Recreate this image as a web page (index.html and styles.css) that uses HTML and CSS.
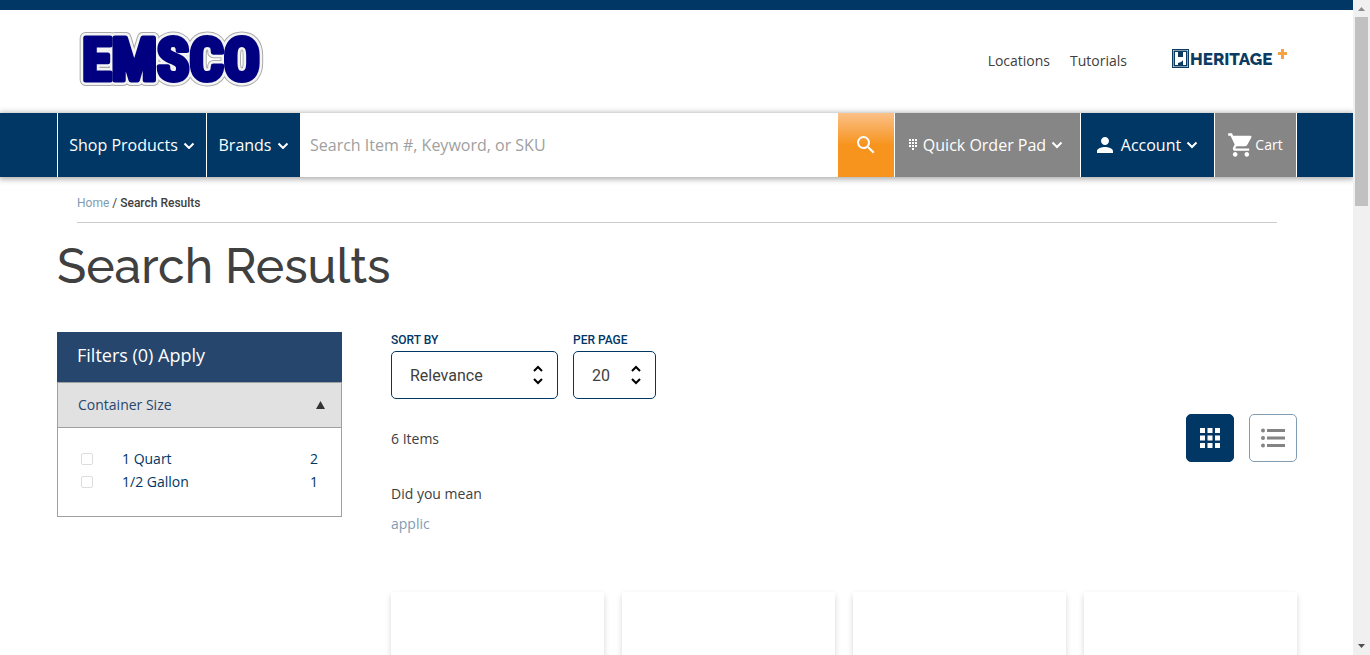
FILE: index.html
```
<!DOCTYPE html>
<html lang="en">
<head>
<meta charset="utf-8">
<title>Search Results</title>
<link rel="stylesheet" href="styles.css">
</head>
<body>
<div class="shell">
<div class="page">
  <header class="header">
    <a class="logo" href="#" aria-label="EMSCO">
      <svg width="200" height="84" viewBox="0 0 200 84">
        <g class="logo-text" font-size="60" text-anchor="middle">
          <text class="logo-edge" x="100" y="64">EMSCO</text>
          <text class="logo-halo" x="100" y="64">EMSCO</text>
          <text class="logo-face" x="100" y="64">EMSCO</text>
        </g>
      </svg>
    </a>
    <nav class="top-links">
      <a href="#">Locations</a>
      <a href="#">Tutorials</a>
      <a class="heritage" href="#" aria-label="Heritage Plus">
        <svg width="116" height="22" viewBox="0 0 116 22">
          <rect x="0.500" y="1.500" width="16" height="18" fill="#fff" stroke="#0b3b62"/>
          <path fill="#0b3b62" d="M1.500 2.500h14v16h-14z"/>
          <path fill="#fff" d="M3 4h3v5h5V4h3v13h-3v-5c-1 2-3 2-5 3v2H3z"/>
          <text class="heritage-text" x="18" y="17" font-size="17">HERITAGE</text>
          <path fill="#f7a145" d="M109 1h3v3h3v3h-3v4h-3V7h-3V4h3z"/>
        </svg>
      </a>
    </nav>
  </header>

  <div class="navbar">
    <button class="nav-item nav-shop" type="button">Shop Products
      <svg class="chev" width="12" height="8" viewBox="0 0 12 8"><path d="M1.500 2.500 6 7l4.500-4.500"/></svg></button>
    <button class="nav-item nav-brands" type="button">Brands
      <svg class="chev" width="12" height="8" viewBox="0 0 12 8"><path d="M1.500 2.500 6 7l4.500-4.500"/></svg></button>
    <input class="search" type="search" aria-label="Search" placeholder="Search Item #, Keyword, or SKU">
    <button class="search-btn" type="button" aria-label="Search">
      <svg width="24" height="24" viewBox="0 0 24 24"><path fill="#fff" d="M15.500 14h-.79l-.28-.27A6.470 6.470 0 0 0 16 9.500 6.500 6.500 0 1 0 9.500 16c1.610 0 3.090-.59 4.230-1.570l.27.28v.79l5 4.990L20.490 19l-4.990-5zm-6 0C7.010 14 5 11.990 5 9.500S7.010 5 9.500 5 14 7.010 14 9.500 11.990 14 9.500 14z"/></svg>
    </button>
    <button class="nav-item nav-quick" type="button">
      <svg class="pad" width="9" height="12" viewBox="0 0 9 12"><path fill="#fff" d="M0 0h2v2H0zM3 0h2v2H3zM6 0h2v2H6zM0 3h2v2H0zM3 3h2v2H3zM6 3h2v2H6zM0 6h2v2H0zM3 6h2v2H3zM6 6h2v2H6zM3 9h2v2H3z"/></svg>Quick Order Pad
      <svg class="chev" width="12" height="8" viewBox="0 0 12 8"><path d="M1.500 1.500 6 6l4.500-4.500"/></svg></button>
    <button class="nav-item nav-account" type="button">
      <svg class="person" width="16" height="16" viewBox="4 4 16 16"><path fill="#fff" d="M12 12c2.210 0 4-1.790 4-4s-1.790-4-4-4-4 1.790-4 4 1.790 4 4 4zm0 2c-2.670 0-8 1.340-8 4v2h16v-2c0-2.660-5.330-4-8-4z"/></svg>Account
      <svg class="chev" width="12" height="8" viewBox="0 0 12 8"><path d="M1.500 1.500 6 6l4.500-4.500"/></svg></button>
    <button class="nav-item nav-cart" type="button">
      <svg width="26" height="28" viewBox="1 0 22 24"><path fill="#fff" d="M7 18c-1.100 0-1.990.9-1.990 2S5.900 22 7 22s2-.9 2-2-.9-2-2-2zM1 2v2h2l3.600 7.590-1.350 2.450c-.16.280-.25.610-.25.960 0 1.100.9 2 2 2h12v-2H7.420c-.14 0-.25-.11-.25-.25l.03-.12.900-1.630h7.450c.75 0 1.410-.41 1.750-1.030l3.580-6.490A1 1 0 0 0 20 4H5.210l-.94-2H1zm16 16c-1.100 0-1.990.9-1.990 2s.89 2 1.990 2 2-.9 2-2-.9-2-2-2z"/></svg>Cart</button>
  </div>

  <main class="main">
    <nav class="crumbs" aria-label="Breadcrumb"><a href="#">Home</a> / <strong>Search Results</strong></nav>
    <h1 class="title">Search Results</h1>
    <div class="columns">
      <aside class="filters">
        <h2 class="filters-head">Filters (0) Apply</h2>
        <button class="group-head" type="button">Container Size
          <svg width="9" height="8" viewBox="0 0 9 8"><path fill="#333" d="M4.500 0 9 8H0z"/></svg></button>
        <div class="group-body">
          <label class="option"><input type="checkbox"><span>1 Quart</span><span class="count">2</span></label>
          <label class="option"><input type="checkbox"><span>1/2 Gallon</span><span class="count">1</span></label>
        </div>
      </aside>
      <section class="results">
        <div class="sorting">
          <div class="field">
            <label for="sort">SORT BY</label>
            <div class="picker">
              <select id="sort" class="sort-select"><option>Relevance</option></select>
              <svg width="12" height="20" viewBox="0 0 12 20"><path d="M2 6l4-4 4 4M2 14l4 4 4-4"/></svg>
            </div>
          </div>
          <div class="field">
            <label for="per">PER PAGE</label>
            <div class="picker">
              <select id="per" class="per-select"><option>20</option></select>
              <svg width="12" height="20" viewBox="0 0 12 20"><path d="M2 6l4-4 4 4M2 14l4 4 4-4"/></svg>
            </div>
          </div>
        </div>
        <div class="summary">
          <p class="total">6 Items</p>
          <div class="views">
            <button class="view view-on" type="button" aria-label="Grid view">
              <svg width="20" height="20" viewBox="0 0 20 20"><path fill="#fff" d="M0 0h5v5H0zM7.500 0h5v5h-5zM15 0h5v5h-5zM0 7.500h5v5H0zM7.500 7.500h5v5h-5zM15 7.500h5v5h-5zM0 15h5v5H0zM7.500 15h5v5h-5zM15 15h5v5h-5z"/></svg>
            </button>
            <button class="view" type="button" aria-label="List view">
              <svg width="24" height="20" viewBox="0 0 24 20" fill="#848484"><circle cx="2" cy="2.500" r="2"/><circle cx="2" cy="10" r="2"/><circle cx="2" cy="17.500" r="2"/><path d="M6 1h18v3H6zM6 8.500h18v3H6zM6 16h18v3H6z"/></svg>
            </button>
          </div>
        </div>
        <p class="suggest">Did you mean</p>
        <a class="suggest-link" href="#">applic</a>
        <div class="cards">
          <article class="card"></article>
          <article class="card"></article>
          <article class="card"></article>
          <article class="card"></article>
        </div>
      </section>
    </div>
  </main>
</div>
<div class="scrollbar" aria-hidden="true">
  <svg width="17" height="17" viewBox="0 0 17 17"><path fill="#8b8b8b" d="M5 11h7L8.500 7z"/></svg>
  <div class="thumb"></div>
  <svg width="17" height="17" viewBox="0 0 17 17"><path fill="#505050" d="M5 6h7l-3.500 4z"/></svg>
</div>
</div>
</body>
</html>
```
FILE: styles.css
```
* { box-sizing: border-box; }
body { margin: 0; background: #fff; color: #404040; font: 14px/20px "Open Sans", sans-serif; }
a { color: inherit; text-decoration: none; }
p, h1, h2 { margin: 0; font-weight: 400; }
button { border: 0; border-radius: 0; margin: 0; font: inherit; cursor: pointer; }
svg { display: block; flex: none; }

.shell { display: flex; height: 100vh; overflow: hidden; }
.page { flex: 1; min-width: 0; overflow: hidden; border-top: 10px solid #003764; }

.header { display: flex; justify-content: space-between; align-items: center; height: 103px; padding: 0 65px 0 71px; }
.logo { margin-bottom: 8px; }
.logo-text { font-family: "Roboto Condensed", "Liberation Sans Narrow", Roboto, sans-serif; font-weight: 700; stroke-linejoin: round; }
.logo-edge { fill: #a9a9a9; stroke: #a9a9a9; stroke-width: 12px; }
.logo-halo { fill: #f4f4f4; stroke: #f4f4f4; stroke-width: 10px; }
.logo-face { fill: #000080; stroke: #000080; stroke-width: 5px; }
.top-links { display: flex; align-items: center; gap: 20px; margin-bottom: 2px; }
.heritage { margin: 0 0 3px 25px; }
.heritage-text { font-family: Raleway, Lato, sans-serif; font-weight: 800; fill: #0b3b62; }

.navbar { display: flex; height: 64px; padding: 0 56px 0 57px; background: #003764; box-shadow: 0 1px 6px 1px rgba(0, 0, 0, .35); }
.nav-item { display: flex; align-items: center; justify-content: center; padding: 0; background: #003764; color: #fff; border-left: 1px solid #fff; font-size: 16px; gap: 5px; }
.nav-shop { width: 149px; }
.nav-brands { width: 94px; }
.nav-quick { width: 186px; padding-right: 3px; background: #868686; }
.nav-account { width: 134px; }
.nav-cart { width: 83px; background: #868686; border-right: 1px solid #fff; font-size: 14px; gap: 1px; }
.chev { fill: none; stroke: #fff; stroke-width: 2px; }
.person { margin-right: 3px; }
.search { flex: 1; min-width: 0; border: 0; border-radius: 0; padding: 0 10px; background: #fff; font: 16px "Open Sans", sans-serif; }
.search::placeholder { color: #a0a0a0; }
.search-btn { display: flex; align-items: center; justify-content: center; width: 56px; padding: 0; background: linear-gradient(#fbc088, #f7941e 50%); }

.main { padding: 0 56px 0 57px; }
.crumbs { margin: 0 20px; padding: 16px 0 9px; border-bottom: 1px solid #ccc; font: 12px/20px Roboto, sans-serif; }
.crumbs a { color: #7f9cb2; }
.crumbs strong { font-weight: 500; }
.title { font: 500 48px/64px Raleway, Lato, sans-serif; padding: 11px 0 34px; }

.columns { display: flex; gap: 49px; }
.filters { width: 285px; flex: none; color: #003764; }
.filters-head { padding: 11px 20px 15px; background: #27466d; color: #fff; font-size: 18px; line-height: 24px; }
.group-head { display: flex; width: 100%; align-items: center; justify-content: space-between; padding: 12px 16px 12px 20px; border: 1px solid #a0a0a0; background: #e1e1e1; color: #27466d; }
.group-body { padding: 19px 23px 23px; border: 1px solid #a0a0a0; border-top: 0; }
.option { display: flex; align-items: center; line-height: 23px; }
.option input { appearance: none; width: 12px; height: 12px; margin: 1px 29px 0 0; border: 1px solid #ddd; border-radius: 2px; background: #fff; }
.count { margin-left: auto; }

.results { flex: 1; min-width: 0; }
.sorting { display: flex; gap: 15px; }
.field { display: flex; flex-direction: column; }
.field label { color: #003764; font: 500 12px/16px Roboto, sans-serif; margin-bottom: 3px; }
.picker { display: grid; align-items: center; justify-items: end; }
.picker select, .picker svg { grid-area: 1 / 1; }
.picker svg { margin-right: 14px; fill: none; stroke: #000; stroke-width: 2px; pointer-events: none; }
.picker select { appearance: none; height: 48px; padding: 0 18px; border: 1px solid #003764; border-radius: 5px; background: #fff; color: #404040; font: 16px Roboto, sans-serif; }
.sort-select { width: 167px; }
.per-select { width: 83px; }
.summary { display: flex; justify-content: space-between; margin-top: 15px; }
.total { padding-top: 15px; }
.views { display: flex; gap: 15px; }
.view { display: flex; align-items: center; justify-content: center; width: 48px; height: 48px; padding: 0; border: 1px solid #809db4; border-radius: 5px; background: #fff; }
.view-on { background: #003764; border-color: #003764; }
.suggest { margin: 22px 0 10px; }
.suggest-link { color: #7f9cb2; }
.cards { display: grid; grid-template-columns: repeat(4, 1fr); gap: 18px; margin-top: 58px; }
.card { height: 400px; background: #fff; box-shadow: 0 3px 6px rgba(0, 0, 0, .16); }

.scrollbar { display: flex; flex-direction: column; width: 17px; background: #f0f0f0; }
.thumb { width: 13px; height: 189px; margin: 0 2px auto; background: #c1c1c1; }
```
